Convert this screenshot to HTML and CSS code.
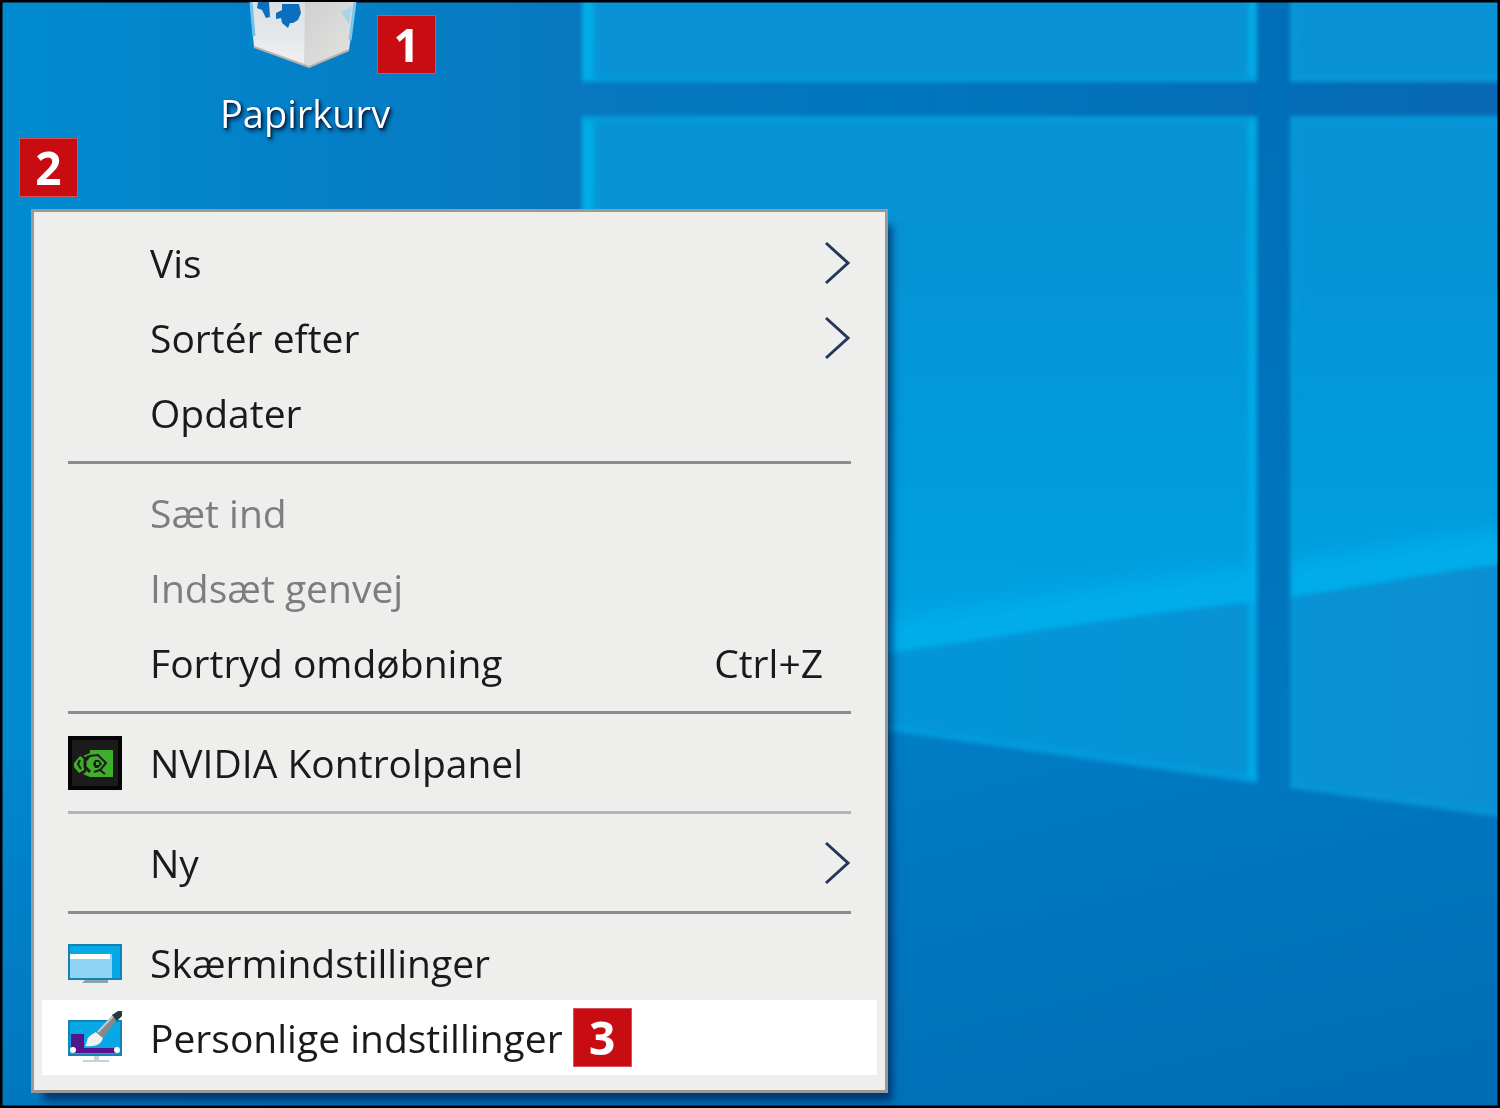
FILE: index.html
```html
<!DOCTYPE html>
<html lang="da">
<head>
    <meta charset="UTF-8">
    <meta name="viewport" content="width=device-width, initial-scale=1.0">
    <title>Skrivebord</title>
    <link rel="stylesheet" href="styles.css">
</head>
<body>

<main class="desktop">

    <!-- Wallpaper -->
    <svg class="wallpaper" viewBox="0 0 1500 1108" preserveAspectRatio="none" aria-hidden="true">
        <defs>
            <linearGradient id="base" x1="0" y1="0" x2="1" y2="0">
                <stop offset="0" stop-color="#008bd0"/>
                <stop offset="0.2" stop-color="#0481c8"/>
                <stop offset="0.38" stop-color="#0878c0"/>
                <stop offset="0.6" stop-color="#0076be"/>
                <stop offset="1" stop-color="#0868b4"/>
            </linearGradient>
            <linearGradient id="floor" x1="0" y1="0" x2="1" y2="1">
                <stop offset="0" stop-color="#0088d0"/>
                <stop offset="0.4" stop-color="#007ac2"/>
                <stop offset="1" stop-color="#006cb5"/>
            </linearGradient>
            <linearGradient id="pane" x1="0" y1="0" x2="0" y2="1">
                <stop offset="0" stop-color="#0a92d5"/>
                <stop offset="0.4" stop-color="#0694d7"/>
                <stop offset="0.68" stop-color="#009bdc"/>
                <stop offset="1" stop-color="#00a4e4"/>
            </linearGradient>
            <linearGradient id="lower" x1="0" y1="0" x2="1" y2="0">
                <stop offset="0" stop-color="#0098da"/>
                <stop offset="0.6" stop-color="#0694d7"/>
                <stop offset="1" stop-color="#0c8fd2"/>
            </linearGradient>
            <linearGradient id="bar" x1="0" y1="0" x2="0" y2="1">
                <stop offset="0" stop-color="#006eb8"/>
                <stop offset="1" stop-color="#0078c0"/>
            </linearGradient>
            <filter id="edge" color-interpolation-filters="sRGB"><feGaussianBlur stdDeviation="2"/></filter>
            <filter id="soft" color-interpolation-filters="sRGB"><feGaussianBlur stdDeviation="3"/></filter>
            <filter id="glow" color-interpolation-filters="sRGB"><feGaussianBlur stdDeviation="5"/></filter>
            <filter id="beam" color-interpolation-filters="sRGB" x="-10%" y="-60%" width="120%" height="220%"><feGaussianBlur stdDeviation="14"/></filter>
            <clipPath id="panes">
                <path d="M582 -20H1257V82H582ZM1290 -20H1520V82H1290ZM582 116H1257V783L880 730L582 700ZM1290 116H1520V820L1290 788Z"/>
            </clipPath>
            <clipPath id="above">
                <path d="M580 0H1520V562C1420 574 1350 590 1257 602C1120 616 1000 638 880 654L580 690Z"/>
            </clipPath>
        </defs>
        <rect width="1500" height="1108" fill="url(#base)"/>
        <path d="M0 760L880 731L1257 782L1500 817V1108H0Z" fill="url(#floor)"/>
        <path d="M1257 0H1290V790H1257Z" fill="url(#bar)"/>
        <g filter="url(#edge)">
            <g clip-path="url(#panes)">
                <rect x="580" y="-20" width="940" height="720" fill="url(#pane)"/>
                <path d="M580 690L880 654C1000 638 1120 616 1257 602C1350 590 1420 574 1520 562V830H580Z" fill="url(#lower)"/>
                <g clip-path="url(#above)">
                    <path d="M860 646C1000 626 1120 602 1257 588C1350 576 1420 560 1530 548" fill="none" stroke="#00b0ec" stroke-width="36" filter="url(#beam)"/>
                </g>
                <g fill="none" stroke="#00a6e4" stroke-width="6" filter="url(#glow)">
                    <path d="M582 -20H1257V82H582ZM582 116H1257V783L880 730L582 700Z"/>
                    <path d="M1290 -20H1540V82H1290ZM1290 116H1540V822L1290 788Z" opacity="0.6"/>
                </g>
                <g fill="none" stroke="#00b2ea" filter="url(#soft)">
                    <path d="M587 -20V80M587 120V700" stroke-width="12"/>
                    <path d="M1253 -20V76M1253 120V780" stroke-width="7"/>
                </g>
            </g>
        </g>
        <rect class="wallpaper-edge" x="0" y="0" width="1500" height="1108"/>
    </svg>

    <!-- Recycle bin -->
    <div class="shortcut-row">
        <a class="shortcut" href="#papirkurv">
            <svg class="bin" viewBox="0 0 112 68" aria-hidden="true">
                <defs>
                    <linearGradient id="binLeft" x1="0" y1="0" x2="0" y2="1">
                        <stop offset="0" stop-color="#d9e0e4"/>
                        <stop offset="1" stop-color="#f1f1f0"/>
                    </linearGradient>
                    <linearGradient id="binRight" x1="0" y1="0" x2="1" y2="1">
                        <stop offset="0" stop-color="#cfcfcf"/>
                        <stop offset="1" stop-color="#e4e4e2"/>
                    </linearGradient>
                </defs>
                <path d="M1 0H60V65L55 63L5 45Z" fill="url(#binLeft)"/>
                <path d="M56 0H107L100 48L60 65L55 63Z" fill="url(#binRight)"/>
                <path d="M5 45L55 63L60 65L100 48" fill="none" stroke="#b9b4ad" stroke-width="2"/>
                <path d="M2 0L5 34" stroke="#6fc2ea" stroke-width="3"/>
                <path d="M106 0L101 38" stroke="#7cc8ec" stroke-width="3"/>
                <path d="M92 10L103 4L100 22Z" fill="#a8d4ea"/>
                <path d="M9 0H20L21 15L17 16L13 8L8 6Z" fill="#0b6fbd"/>
                <path d="M33 2H50L52 11L49 18L44 21H41L39 26L33 21L32 16L27 17V11L33 8Z" fill="#0b6fbd"/>
            </svg>
            <span class="shortcut-label">Papirkurv</span>
        </a>
        <span class="badge">1</span>
    </div>

    <span class="badge badge-menu">2</span>

    <!-- Context menu -->
    <ul class="menu">
        <li><button class="item" type="button">
            <span class="icon"></span><span class="label">Vis</span>
            <svg class="chevron" viewBox="0 0 26 44" aria-hidden="true"><path d="M1 2L23 22L1 42"/></svg>
        </button></li>
        <li><button class="item" type="button">
            <span class="icon"></span><span class="label">Sortér efter</span>
            <svg class="chevron" viewBox="0 0 26 44" aria-hidden="true"><path d="M1 2L23 22L1 42"/></svg>
        </button></li>
        <li><button class="item" type="button"><span class="icon"></span><span class="label">Opdater</span></button></li>
        <li class="separator"></li>
        <li><button class="item" type="button" disabled><span class="icon"></span><span class="label">Sæt ind</span></button></li>
        <li><button class="item" type="button" disabled><span class="icon"></span><span class="label">Indsæt genvej</span></button></li>
        <li><button class="item" type="button">
            <span class="icon"></span><span class="label">Fortryd omdøbning</span>
            <span class="keys">Ctrl+Z</span>
        </button></li>
        <li class="separator"></li>
        <li><button class="item" type="button">
            <svg class="icon" viewBox="0 0 54 54" aria-hidden="true">
                <rect width="54" height="54" fill="#050505"/>
                <rect x="4" y="4" width="46" height="46" fill="#1b1b1b"/>
                <path d="M22 14H45V41H22L15 38L18 36V21L15 20L22 17Z" fill="#3fae2a"/>
                <path d="M12 20L6 27V31L11 37L16 34L18 29L15 22Z" fill="#3fae2a"/>
                <path d="M12 24L10 28L13 33" fill="none" stroke="#1b1b1b" stroke-width="2"/>
                <path d="M21 20L17 25V31L22 36" fill="none" stroke="#1b1b1b" stroke-width="3"/>
                <path d="M21 20L30 19L38 27L32 34L37 38" fill="none" stroke="#1b1b1b" stroke-width="2"/>
                <path d="M32 34L26 36" stroke="#1b1b1b" stroke-width="2"/>
                <path d="M27 24H31L34 28L30 32H27L25 28Z" fill="#1b1b1b"/>
                <rect x="28" y="26" width="3" height="3" fill="#3fae2a"/>
            </svg>
            <span class="label">NVIDIA Kontrolpanel</span>
        </button></li>
        <li class="separator separator-light"></li>
        <li><button class="item" type="button">
            <span class="icon"></span><span class="label">Ny</span>
            <svg class="chevron" viewBox="0 0 26 44" aria-hidden="true"><path d="M1 2L23 22L1 42"/></svg>
        </button></li>
        <li class="separator"></li>
        <li><button class="item" type="button">
            <svg class="icon" viewBox="0 0 54 54" aria-hidden="true">
                <rect y="8" width="54" height="36" fill="#1682b4"/>
                <rect x="2" y="10" width="50" height="32" fill="#06a9e6"/>
                <rect x="2" y="18" width="42" height="24" fill="#8fd3f5"/>
                <rect x="2" y="18" width="40" height="5" fill="#fff"/>
                <path d="M17 44H40V47H14Z" fill="#8ba3ae"/>
            </svg>
            <span class="label">Skærmindstillinger</span>
        </button></li>
        <li><button class="item item-active" type="button">
            <svg class="icon" viewBox="0 0 54 54" aria-hidden="true">
                <rect y="9" width="54" height="36" fill="#1682b4"/>
                <rect x="2" y="11" width="50" height="32" fill="#06a9e6"/>
                <path d="M3 23H16V37H48V42H3Z" fill="#56148c"/>
                <circle cx="5" cy="39" r="3" fill="#fff"/>
                <circle cx="49" cy="39" r="3" fill="#fff"/>
                <path d="M26 45H31V49H41V51H15V49H26Z" fill="#c3d3db"/>
                <path d="M17 35C20 31 18 27 23 24L28 21L35 27C33 33 29 36 17 35Z" fill="#f1f1ee"/>
                <path d="M28 21L46 3L50 7L35 27Z" fill="#85898b"/>
                <path d="M30 21L46 4" stroke="#c4c8ca" stroke-width="2"/>
                <path d="M44 4L50 0H54V5L49 10Z" fill="#273842"/>
            </svg>
            <span class="label">Personlige indstillinger</span>
            <span class="badge">3</span>
        </button></li>
    </ul>

</main>

</body>
</html>
```

FILE: styles.css
```css
* {
    box-sizing: border-box;
}

body {
    margin: 0;
    font-family: "Open Sans", "Noto Sans", sans-serif;
}

/* Desktop */
.desktop {
    position: relative;
    min-height: 100vh;
    overflow: hidden;
    background: #0084cc;
}

.wallpaper {
    position: absolute;
    top: 0;
    left: 0;
    width: 100%;
    height: 100%;
}

.wallpaper-edge {
    fill: none;
    stroke: #000;
    stroke-width: 5;
}

/* Numbered badges */
.badge {
    display: flex;
    flex: none;
    align-items: center;
    justify-content: center;
    width: 59px;
    height: 59px;
    padding-bottom: 2px;
    background: #c80d12;
    border: 1px solid #d8505c;
    color: #fff;
    font-size: 46px;
    font-weight: 700;
    line-height: 1;
}

.badge-menu {
    position: absolute;
    top: 138px;
    left: 19px;
}

/* Desktop shortcut */
.shortcut-row {
    position: absolute;
    top: 2px;
    left: 220px;
    display: flex;
    align-items: flex-start;
}

.shortcut-row .badge {
    margin: 13px 0 0 -13px;
}

.shortcut {
    display: flex;
    flex-direction: column;
    align-items: center;
    gap: 19px;
    color: #fff;
    text-decoration: none;
}

.bin {
    width: 112px;
    height: 68px;
}

.shortcut-label {
    font-size: 38px;
    line-height: 48px;
    text-shadow: 2px 3px 4px #001c40, 1px 1px 2px #001c40;
}

/* Context menu */
.menu {
    position: absolute;
    top: 209px;
    left: 31px;
    right: 612px;
    margin: 0;
    padding: 13px 8px 15px;
    list-style: none;
    background: #eeeeed;
    border: 3px solid #999;
    box-shadow: 8px 12px 8px -4px rgba(0, 30, 80, 0.7);
}

.item {
    display: flex;
    align-items: center;
    width: 100%;
    height: 75px;
    padding: 0 26px;
    background: none;
    border: 0;
    color: #1a1a1a;
    font-family: inherit;
    font-size: 39px;
    line-height: 48px;
    text-align: left;
    white-space: nowrap;
}

.item:disabled {
    color: #7d7d7d;
}

.item:hover:enabled,
.item-active {
    background: #fff;
}

.icon {
    flex: none;
    width: 54px;
    height: 54px;
    margin-right: 28px;
}

.item .badge {
    margin-left: 10px;
}

.keys {
    margin-left: auto;
    padding-right: 28px;
}

.chevron {
    width: 26px;
    height: 44px;
    margin-left: auto;
    fill: none;
    stroke: #25365c;
    stroke-width: 3;
}

.separator {
    display: flex;
    align-items: center;
    height: 25px;
    padding: 0 26px;
}

.separator::before {
    content: "";
    flex: 1;
    height: 3px;
    background: #8c8c8c;
}

.separator-light::before {
    background: #b4b4b4;
}
```
